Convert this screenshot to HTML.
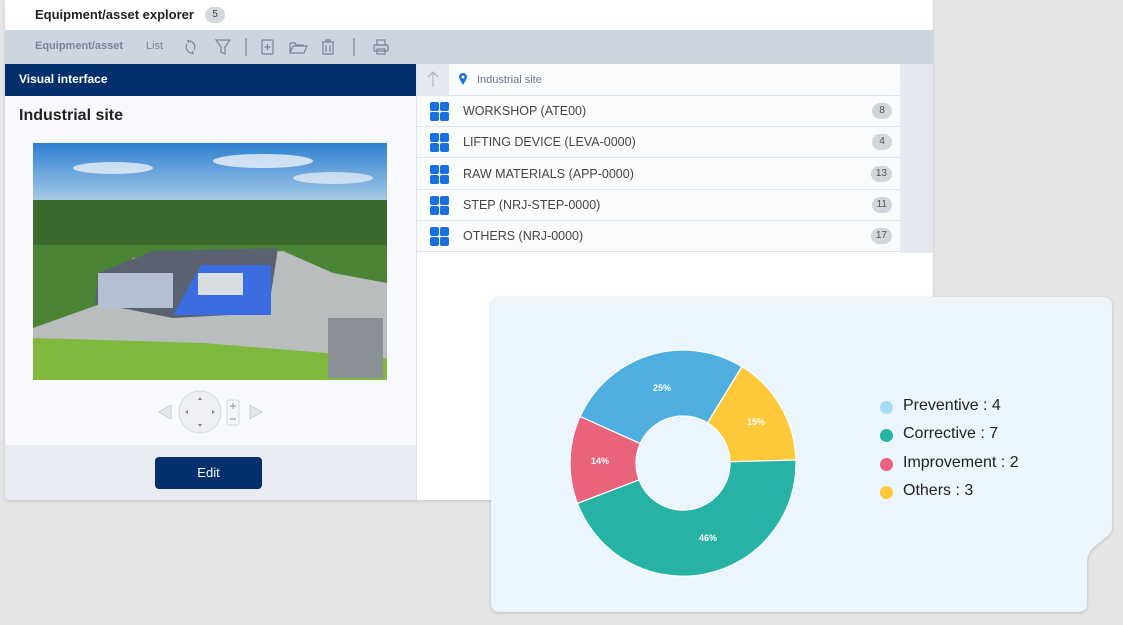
<!DOCTYPE html>
<html><head><meta charset="utf-8"><style>
*{box-sizing:border-box;margin:0;padding:0}
body{width:1123px;height:625px;background:#e6e6e6;font-family:"Liberation Sans",sans-serif;position:relative;overflow:hidden}
.abs{position:absolute}
.card{left:5px;top:0;width:928px;height:500px;background:#fff;border-radius:0 0 4px 4px;box-shadow:0 1px 3px rgba(0,0,0,.15);overflow:hidden}
.row{position:absolute;left:417px;width:483px;height:31px;border-bottom:1px solid #dde3ea;background:#f9fbfd;font-size:12.5px;color:#444;}
.row .ic{position:absolute;left:13px;top:6px;width:19px;height:19px}
.row .t{position:absolute;left:46px;top:8px;letter-spacing:0}
.row .b{position:absolute;right:8px;top:7px;height:16px;min-width:20px;padding:0 5px;border-radius:8px;background:#d0d6de;font-size:10px;line-height:16px;text-align:center;color:#555}
.leg{position:absolute;left:880px;font-size:16px;color:#222}
.leg i{position:absolute;left:0;top:4px;width:13px;height:13px;border-radius:50%}
.leg span{position:absolute;left:23px;white-space:nowrap}
</style></head><body>
<div class="abs card">
  <div class="abs" style="left:30px;top:7px;font-size:13px;font-weight:bold;color:#222">Equipment/asset explorer</div>
  <div class="abs" style="left:200px;top:7px;width:20px;height:16px;border-radius:8px;background:#d3d9e1;font-size:10px;text-align:center;line-height:16px;color:#444">5</div>
  <div class="abs" style="left:0;top:30px;width:928px;height:34px;background:#cdd5e0"></div>
  <div class="abs" style="left:30px;top:40px;font-size:11px;font-weight:bold;color:#7a8594">Equipment/asset</div>
  <div class="abs" style="left:141px;top:40px;font-size:11px;color:#7a8594">List</div>
  <svg class="abs" style="left:175px;top:36px" width="210" height="22" viewBox="0 0 210 22" fill="none" stroke="#7a8594" stroke-width="1.2">
    <path d="M9 5a6 6 0 0 1 5 9M12 17a6 6 0 0 1-5-9M7 4l2 1-1 2M14 18l-2-1 1-2"/>
    <path d="M36 4h14l-5 7v7l-4-2v-5z"/>
    <line x1="66" y1="2" x2="66" y2="20"/>
    <rect x="82" y="4" width="11" height="14" rx="1"/><path d="M87.5 8v6M84.5 11h6"/>
    <path d="M110 7v10h14l3-7h-14l-3 7M110 7h5l1 2h7v1"/>
    <path d="M142 6h12M146 6v-2h4v2M143 6v12h10v-12M146 9v7M150 9v7"/>
    <line x1="174" y1="2" x2="174" y2="20"/>
    <rect x="194" y="9" width="14" height="6" rx="1"/><rect x="197" y="4" width="8" height="5"/><rect x="197" y="13" width="8" height="5"/>
  </svg>
  <div class="abs" style="left:0;top:64px;width:411px;height:32px;background:#03306d"></div>
  <div class="abs" style="left:14px;top:72px;font-size:12px;font-weight:bold;color:#fff">Visual interface</div>
  <div class="abs" style="left:0;top:96px;width:411px;height:349px;background:#f7f9fc"></div>
  <div class="abs" style="left:14px;top:107px;font-size:16px;font-weight:bold;color:#222">Industrial site</div>
  <svg class="abs" style="left:28px;top:143px" width="354" height="237" viewBox="0 0 354 237">
    <defs><linearGradient id="sky" x1="0" y1="0" x2="0" y2="1"><stop offset="0" stop-color="#2f7fd0"/><stop offset="1" stop-color="#a9cde8"/></linearGradient></defs>
    <rect width="354" height="60" fill="url(#sky)"/>
    <ellipse cx="80" cy="25" rx="40" ry="6" fill="#e8f0f8" opacity=".8"/><ellipse cx="230" cy="18" rx="50" ry="7" fill="#eef4fa" opacity=".8"/><ellipse cx="300" cy="35" rx="40" ry="6" fill="#eef4fa" opacity=".7"/>
    <rect y="57" width="354" height="180" fill="#4a8434"/>
    <rect y="57" width="354" height="45" fill="#3a6a2e"/>
    <path d="M0 185L70 160L100 115L250 108L300 130L354 140V237H0z" fill="#b9bdbd"/>
    <path d="M0 195L170 200L354 215V237H0z" fill="#7eb83c"/>
    <path d="M65 130L120 108L245 105L235 170L140 175L62 160z" fill="#5a6270"/>
    <path d="M65 130h75v35h-75z" fill="#b4bfd2"/>
    <path d="M140 172h98v-50h-70z" fill="#3b6ce0"/>
    <path d="M165 130h45v22h-45z" fill="#d8dde2"/>
    <rect x="295" y="175" width="55" height="60" fill="#8b9096"/>
  </svg>
  <svg class="abs" style="left:150px;top:390px" width="110" height="45" viewBox="0 0 110 45">
    <path d="M16 15l-12 7 12 7z" fill="#e4e8ec" stroke="#ccd" />
    <circle cx="45" cy="22" r="21" fill="#eef0f3" stroke="#d4d8dc"/>
    <path d="M45 7l-2 3h4zM45 37l-2-3h4zM30 22l3-2v4zM60 22l-3-2v4z" fill="#888"/>
    <rect x="72" y="10" width="12" height="25" rx="2" fill="#f2f4f6" stroke="#cdd"/>
    <path d="M75 16h6M78 13v6M75 29h6" stroke="#999"/>
    <path d="M95 15l12 7-12 7z" fill="#e4e8ec" stroke="#ccd"/>
  </svg>
  <div class="abs" style="left:0;top:445px;width:411px;height:55px;background:#e8ecf2"></div>
  <div class="abs" style="left:150px;top:457px;width:107px;height:32px;background:#03306d;border-radius:4px;color:#fff;font-size:13px;text-align:center;line-height:32px">Edit</div>
  <div class="abs" style="left:411px;top:64px;width:1px;height:436px;background:#dde3ea"></div>
</div>
<div class="abs" style="left:417px;top:64px;width:516px;height:436px;background:#fff"></div>
<div class="abs" style="left:417px;top:64px;width:32px;height:32px;background:#e5e9ef"></div>
<svg class="abs" style="left:425px;top:70px" width="16" height="18"><path d="M8 2v15M3 7l5-5 5 5" stroke="#aab" fill="none"/></svg>
<div class="abs" style="left:449px;top:64px;width:451px;height:32px;background:#f9fbfd;border-bottom:1px solid #dde3ea"></div>
<svg class="abs" style="left:458px;top:72px" width="10" height="14"><path d="M5 13C2 8 1 6 1 5a4 4 0 0 1 8 0c0 1-1 3-4 8z" fill="#1a6fe0"/><circle cx="5" cy="5" r="1.5" fill="#fff"/></svg>
<div class="abs" style="left:477px;top:74px;font-size:11px;color:#6a7684">Industrial site</div>
<div class="abs" style="left:900px;top:64px;width:33px;height:189px;background:#e5e9ef"></div>
<div class="row" style="top:96px"><svg class="ic"><rect x="0" y="0" width="9" height="9" rx="2" fill="#1a6fe0"/><rect x="10" y="0" width="9" height="9" rx="2" fill="#1a6fe0"/><rect x="0" y="10" width="9" height="9" rx="2" fill="#1a6fe0"/><rect x="10" y="10" width="9" height="9" rx="2" fill="#1a6fe0"/></svg><span class="t">WORKSHOP (ATE00)</span><span class="b">8</span></div>
<div class="row" style="top:127px"><svg class="ic"><rect x="0" y="0" width="9" height="9" rx="2" fill="#1a6fe0"/><rect x="10" y="0" width="9" height="9" rx="2" fill="#1a6fe0"/><rect x="0" y="10" width="9" height="9" rx="2" fill="#1a6fe0"/><rect x="10" y="10" width="9" height="9" rx="2" fill="#1a6fe0"/></svg><span class="t">LIFTING DEVICE (LEVA-0000)</span><span class="b">4</span></div>
<div class="row" style="top:159px"><svg class="ic"><rect x="0" y="0" width="9" height="9" rx="2" fill="#1a6fe0"/><rect x="10" y="0" width="9" height="9" rx="2" fill="#1a6fe0"/><rect x="0" y="10" width="9" height="9" rx="2" fill="#1a6fe0"/><rect x="10" y="10" width="9" height="9" rx="2" fill="#1a6fe0"/></svg><span class="t">RAW MATERIALS (APP-0000)</span><span class="b">13</span></div>
<div class="row" style="top:190px"><svg class="ic"><rect x="0" y="0" width="9" height="9" rx="2" fill="#1a6fe0"/><rect x="10" y="0" width="9" height="9" rx="2" fill="#1a6fe0"/><rect x="0" y="10" width="9" height="9" rx="2" fill="#1a6fe0"/><rect x="10" y="10" width="9" height="9" rx="2" fill="#1a6fe0"/></svg><span class="t">STEP (NRJ-STEP-0000)</span><span class="b">11</span></div>
<div class="row" style="top:221px"><svg class="ic"><rect x="0" y="0" width="9" height="9" rx="2" fill="#1a6fe0"/><rect x="10" y="0" width="9" height="9" rx="2" fill="#1a6fe0"/><rect x="0" y="10" width="9" height="9" rx="2" fill="#1a6fe0"/><rect x="10" y="10" width="9" height="9" rx="2" fill="#1a6fe0"/></svg><span class="t">OTHERS (NRJ-0000)</span><span class="b">17</span></div>
<svg class="abs" style="left:0;top:0" width="1123" height="625">
  <defs><filter id="sh" x="-5%" y="-5%" width="110%" height="115%"><feDropShadow dx="0" dy="1" stdDeviation="1.5" flood-color="#000" flood-opacity=".2"/></filter></defs>
  <path d="M499 297H1104a8 8 0 0 1 8 8V527q0 6-6 10L1094 547q-7 6-7 16V604a8 8 0 0 1-8 8H499a8 8 0 0 1-8-8V305a8 8 0 0 1 8-8z" fill="#ebf5fd" filter="url(#sh)"/>
  <g transform="translate(683,463)" stroke="#fff" stroke-width="1.2">
    <path d="M-102.9 -46.5A113 113 0 0 1 58.9 -96.4L24.5 -40.1A47 47 0 0 0 -42.8 -19.4z" fill="#4eaee0"/>
    <path d="M58.9 -96.4A113 113 0 0 1 113 -3L47 -1.2A47 47 0 0 0 24.5 -40.1z" fill="#fdc93a"/>
    <path d="M113 -3A113 113 0 0 1 -105.6 40.3L-43.9 16.8A47 47 0 0 0 47 -1.2z" fill="#26b3a5"/>
    <path d="M-105.6 40.3A113 113 0 0 1 -102.9 -46.5L-42.8 -19.4A47 47 0 0 0 -43.9 16.8z" fill="#e9637d"/>
  </g>
  <g font-family="Liberation Sans, sans-serif" font-size="9" font-weight="bold" fill="#fff" text-anchor="middle">
    <text x="662" y="391">25%</text><text x="756" y="425">15%</text><text x="600" y="464">14%</text><text x="708" y="541">46%</text>
  </g>
</svg>
<div class="leg" style="top:397px"><i style="background:#a7dcf7"></i><span>Preventive : 4</span></div>
<div class="leg" style="top:425px"><i style="background:#26b3a5"></i><span>Corrective : 7</span></div>
<div class="leg" style="top:454px"><i style="background:#e9637d"></i><span>Improvement : 2</span></div>
<div class="leg" style="top:482px"><i style="background:#fdc93a"></i><span>Others : 3</span></div>
</body></html>
